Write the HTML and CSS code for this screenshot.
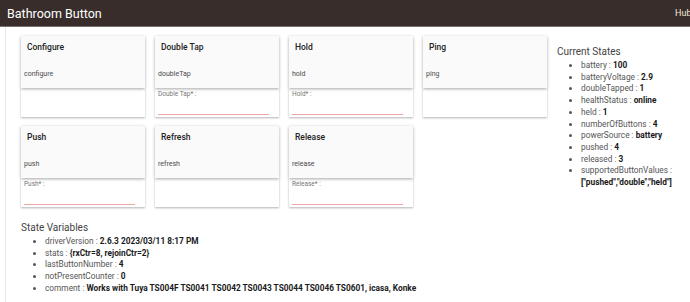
FILE: index.html
```html
<!DOCTYPE html>
<html lang="en">
<head>
  <meta charset="UTF-8">
  <meta name="viewport" content="width=device-width, initial-scale=1.0">
  <title>Bathroom Button</title>
  <link rel="stylesheet" href="styles.css">
</head>
<body>
  <!-- top bar -->
  <div class="topbar">
    <span class="title">Bathroom Button</span>
    <span class="hub">Hub</span>
  </div>

  <div class="page">
    <div class="main">
      <!-- command tiles -->
      <div class="commands">
        <div class="tile">
          <div class="tile-head">
            <div class="tile-name">Configure</div>
            <div class="tile-cmd">configure</div>
          </div>
          <div class="tile-input"></div>
        </div>
        <div class="tile">
          <div class="tile-head">
            <div class="tile-name">Double Tap</div>
            <div class="tile-cmd">doubleTap</div>
          </div>
          <div class="tile-input">
            <label>Double Tap* :</label>
            <div class="field"></div>
          </div>
        </div>
        <div class="tile">
          <div class="tile-head">
            <div class="tile-name">Hold</div>
            <div class="tile-cmd">hold</div>
          </div>
          <div class="tile-input">
            <label>Hold* :</label>
            <div class="field"></div>
          </div>
        </div>
        <div class="tile">
          <div class="tile-head">
            <div class="tile-name">Ping</div>
            <div class="tile-cmd">ping</div>
          </div>
          <div class="tile-input"></div>
        </div>
        <div class="tile">
          <div class="tile-head">
            <div class="tile-name">Push</div>
            <div class="tile-cmd">push</div>
          </div>
          <div class="tile-input">
            <label>Push* :</label>
            <div class="field"></div>
          </div>
        </div>
        <div class="tile">
          <div class="tile-head">
            <div class="tile-name">Refresh</div>
            <div class="tile-cmd">refresh</div>
          </div>
          <div class="tile-input"></div>
        </div>
        <div class="tile">
          <div class="tile-head">
            <div class="tile-name">Release</div>
            <div class="tile-cmd">release</div>
          </div>
          <div class="tile-input">
            <label>Release* :</label>
            <div class="field"></div>
          </div>
        </div>
      </div>

      <!-- state variables -->
      <div class="state-vars">
        <h3>State Variables</h3>
        <ul>
          <li>driverVersion : <b>2.6.3 2023/03/11 8:17 PM</b></li>
          <li>stats : <b>{rxCtr=8, rejoinCtr=2}</b></li>
          <li>lastButtonNumber : <b>4</b></li>
          <li>notPresentCounter : <b>0</b></li>
          <li>comment : <b>Works with Tuya TS004F TS0041 TS0042 TS0043 TS0044 TS0046 TS0601, icasa, Konke</b></li>
        </ul>
      </div>
    </div>

    <!-- current states -->
    <div class="states">
      <h3>Current States</h3>
      <ul>
        <li>battery : <b>100</b></li>
        <li>batteryVoltage : <b>2.9</b></li>
        <li>doubleTapped : <b>1</b></li>
        <li>healthStatus : <b>online</b></li>
        <li>held : <b>1</b></li>
        <li>numberOfButtons : <b>4</b></li>
        <li>powerSource : <b>battery</b></li>
        <li>pushed : <b>4</b></li>
        <li>released : <b>3</b></li>
        <li>supportedButtonValues : <b>["pushed","double","held"]</b></li>
      </ul>
    </div>
  </div>
</body>
</html>
```

FILE: styles.css
```css
body {
  margin: 0;
  font-family: Roboto, "Liberation Sans", sans-serif;
  color: #555;
  background: white;
  overflow: hidden;
}

/* top bar */
.topbar {
  height: 26px;
  background-color: #382d2a;
  border-bottom: 1px solid #77706e;
  display: flex;
  align-items: center;
  justify-content: space-between;
  padding: 0 0 0 7px;
}

.title {
  color: white;
  font-size: 12.5px;
}

.hub {
  color: #f3e9dc;
  font-size: 9px;
  width: 15px;
  overflow: hidden;
  white-space: nowrap;
}

.page {
  display: flex;
  margin-left: 5px;
  border-left: 1px solid #e6e6e6;
  padding-left: 15px;
  height: 280px;
}

/* command tiles */
.commands {
  display: grid;
  grid-template-columns: repeat(4, 124px);
  column-gap: 10px;
  row-gap: 9px;
  padding-top: 9px;
}

.tile-head {
  height: 52px;
  background-color: #fafafa;
  box-shadow: 0 1px 3px rgba(0,0,0,0.35);
  position: relative;
  z-index: 1;
}

.tile-name {
  font-size: 8.5px;
  font-weight: 500;
  color: #222;
  padding: 6px 0 0 6px;
  height: 24px;
}

.tile-cmd {
  font-size: 7px;
  color: #4a4a4a;
  padding: 4px 0 0 3px;
}

.tile-input {
  height: 29px;
  background-color: white;
  box-shadow: 0 1px 2px rgba(0,0,0,0.3);
  padding: 0 10px 0 3px;
  box-sizing: border-box;
}

.tile-input label {
  display: block;
  font-size: 6.5px;
  color: #777;
  padding-top: 2px;
}

.field {
  margin-top: 16px;
  border-bottom: 1.5px solid #eba6a6;
}

/* lists */
h3 {
  font-size: 10px;
  font-weight: normal;
  color: #444;
  margin: 0 0 3px 0;
}

ul {
  margin: 0;
  padding-left: 24px;
  font-size: 8.3px;
  line-height: 11.7px;
}

b {
  font-weight: bold;
  color: #1a1a1a;
}

.state-vars {
  padding-top: 15px;
}

.states {
  margin-left: 10px;
  padding-top: 19px;
  width: 130px;
}
```
